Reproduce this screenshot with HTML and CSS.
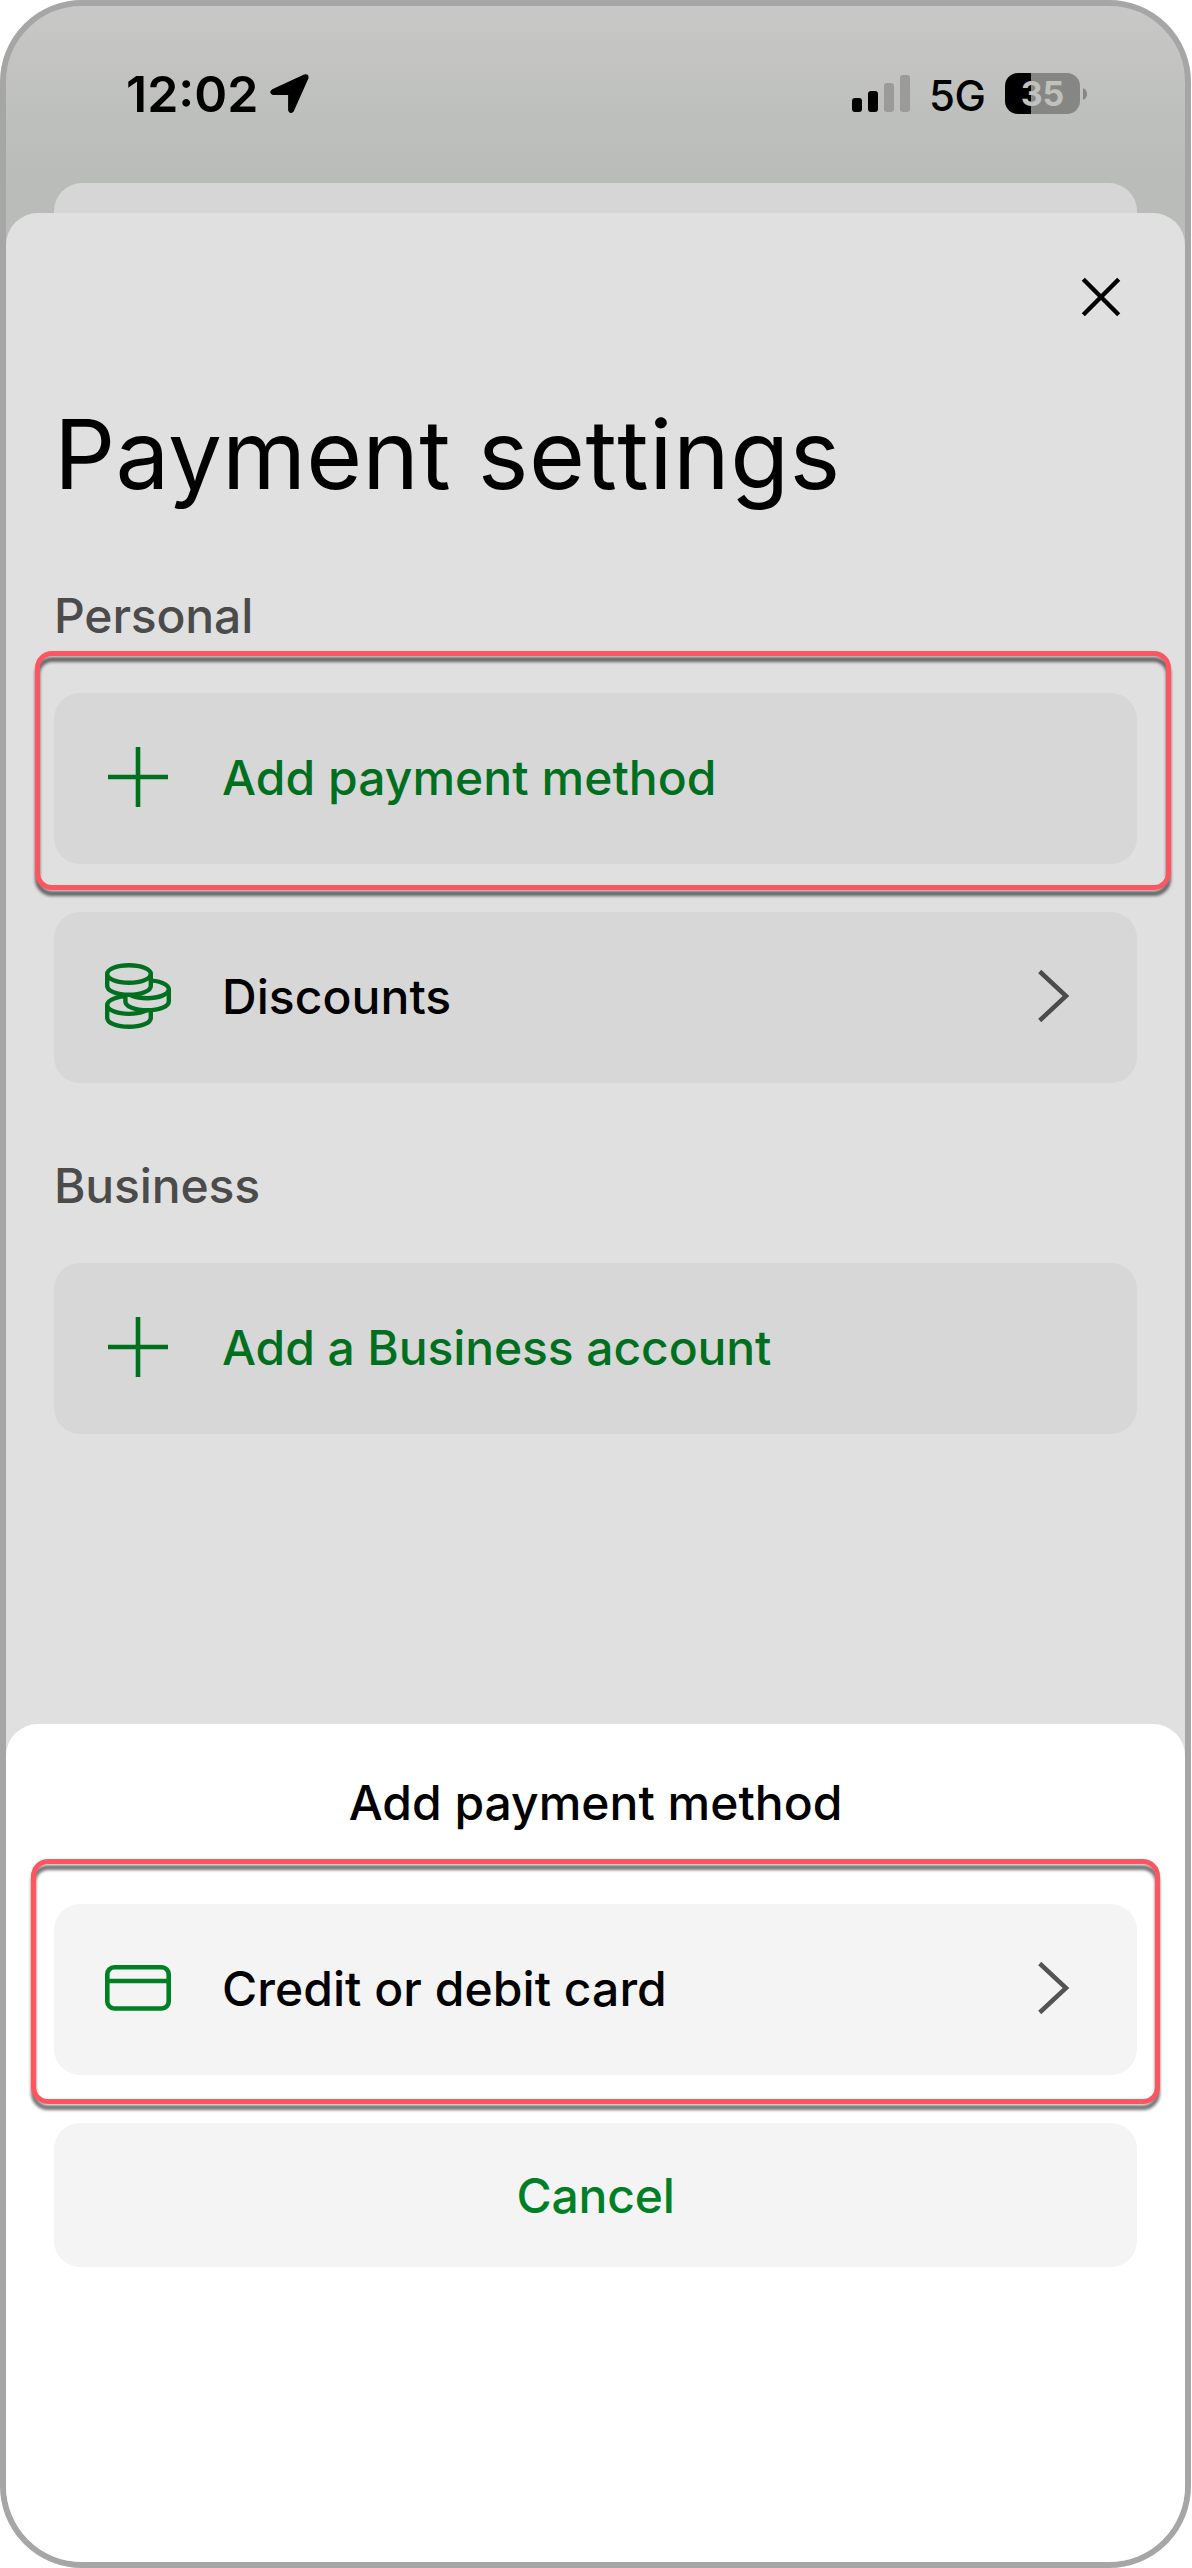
FILE: index.html
```html
<!DOCTYPE html>
<html lang="en">
<head>
<meta charset="utf-8">
<title>Payment settings</title>
<link rel="stylesheet" href="styles.css">
</head>
<body>
<div class="phone">
  <header class="status">
    <div class="status-left">
      <span class="time">12:02</span>
      <svg class="location" width="40" height="40" viewBox="0 0 40 40"><path d="M2.9 16.6 34.7 1.9Q37.5 1.1 37 3.9L22.4 36.6Q20.2 38.8 19.6 36V19.4H3Q.6 18.3 2.9 16.6Z" fill="#000" stroke="#000" stroke-width="3" stroke-linejoin="round"/></svg>
    </div>
    <div class="status-right">
      <svg class="signal" width="58" height="37" viewBox="0 0 58 37"><rect y="23" width="10" height="14" rx="3"/><rect x="16" y="16" width="10" height="21" rx="3"/><rect x="32" y="8" width="10" height="29" rx="3" fill="#9b9c9a"/><rect x="48" width="10" height="37" rx="3" fill="#9b9c9a"/></svg>
      <span class="network">5G</span>
      <div class="battery"><span class="level">35</span></div>
      <svg class="nub" width="4" height="12" viewBox="0 0 4 12"><path d="M0 0Q4 2 4 6T0 12Z" fill="#868785"/></svg>
    </div>
  </header>
  <div class="back-sheet"></div>
  <main class="sheet">
    <div class="close-bar">
      <svg width="40" height="40" viewBox="0 0 40 40"><path d="M2.3 2.3 37.7 37.7M37.7 2.3 2.3 37.7" stroke="#000" stroke-width="4.4"/></svg>
    </div>
    <h1 class="title">Payment <span class="unkerned">settings</span></h1>
    <h2 class="section personal">Personal</h2>
    <div class="row add">
      <svg class="icon" width="66" height="66" viewBox="0 0 66 66"><path d="M3 33H63M33 3V63" stroke="#00701f" stroke-width="4.6"/></svg>
      <span class="label">Add payment method</span>
      <div class="highlight highlight-top"></div>
    </div>
    <div class="row discounts">
      <svg class="icon" width="66" height="66" viewBox="0 0 66 66" fill="#d7d7d7" stroke="#00701f" stroke-width="4.4">
        <path d="M2.2 42V55C2.2 60 12 63.8 24 63.8S45.8 60 45.8 55V42"/><ellipse cx="24" cy="42" rx="21.8" ry="8.9"/>
        <path d="M20.4 26.3V38.4C20.4 43.4 30.1 47.2 42.1 47.2S63.8 43.4 63.8 38.4V26.3"/><ellipse cx="42.1" cy="26.3" rx="21.7" ry="8.9"/>
        <path d="M2.2 11V23C2.2 28 12 31.7 24 31.7S45.8 28 45.8 23V11"/><ellipse cx="24" cy="11" rx="21.8" ry="8.8"/>
      </svg>
      <span class="label">Discounts</span>
      <svg class="chevron" width="32" height="54" viewBox="0 0 32 54"><path d="M1.7 2.5 28 27 1.7 51.5" fill="none" stroke="#4b4b4b" stroke-width="4.5"/></svg>
    </div>
    <h2 class="section business">Business</h2>
    <div class="row add">
      <svg class="icon" width="66" height="66" viewBox="0 0 66 66"><path d="M3 33H63M33 3V63" stroke="#00701f" stroke-width="4.6"/></svg>
      <span class="label tight">Add a Business account</span>
    </div>
    <section class="action-sheet">
      <h3 class="action-title">Add payment method</h3>
      <div class="row light">
        <svg class="icon" width="66" height="66" viewBox="0 0 66 66" fill="none" stroke="#008025" stroke-width="4.6"><rect x="2.3" y="12.3" width="61.4" height="41.2" rx="7"/><path d="M2 26H64"/></svg>
        <span class="label">Credit or debit card</span>
        <svg class="chevron" width="32" height="54" viewBox="0 0 32 54"><path d="M1.7 2.5 28 27 1.7 51.5" fill="none" stroke="#545454" stroke-width="4.5"/></svg>
        <div class="highlight highlight-card"></div>
      </div>
      <button class="cancel">Cancel</button>
    </section>
  </main>
</div>
</body>
</html>
```
FILE: styles.css
```css
* { box-sizing: border-box; }
body { margin: 0; background: #fff; font-family: Inter, "Liberation Sans", sans-serif; color: #000; }
h1, h2, h3 { margin: 0; }

.phone {
  display: flex;
  flex-direction: column;
  width: 1191px;
  height: 2568px;
  border: 6px solid #a6a6a6;
  border-radius: 82px;
  overflow: hidden;
  background: linear-gradient(#c8c8c8 0, #c3c4c1 55px, #bdbfbc 115px, #babcb9 177px);
}

.status {
  display: flex;
  justify-content: space-between;
  height: 177px;
  padding: 67px 98px 0 120px;
}
.status-left, .status-right { display: flex; align-items: flex-start; }
.time { width: 143px; font-size: 50px; line-height: 42px; font-weight: 600; }
.location { margin-top: 1px; margin-left: 1px; }
.signal { margin-top: 2px; }
.network { width: 76px; margin-left: 19px; font-size: 42px; line-height: 45px; font-weight: 500; letter-spacing: -0.5px; }
.battery {
  width: 75px;
  height: 41px;
  border-radius: 13px;
  text-align: center;
  background: linear-gradient(90deg, #000 26px, #868785 26px);
}
.level { display: block; font-size: 34px; line-height: 41px; font-weight: 700; color: #bfc1bd; }
.nub { margin: 15px 0 0 3px; }

.back-sheet { height: 30px; margin: 0 48px; background: #d6d6d6; border-radius: 28px 28px 0 0; }
.sheet {
  flex: 1;
  display: flex;
  flex-direction: column;
  background: #e0e0e0;
  border-radius: 32px 32px 0 0;
}
.close-bar { display: flex; justify-content: flex-end; height: 181px; padding: 64px 64px 0 0; }
.title { margin-left: 48px; font-size: 96px; line-height: 120px; font-weight: 400; letter-spacing: 0.1px; }
.unkerned { font-kerning: none; letter-spacing: 0.5px; }
.section { margin-left: 48px; font-size: 48px; line-height: 60px; font-weight: 450; color: #4b4b4b; letter-spacing: -0.15px; }
.personal { margin-top: 72px; }
.business { margin-top: 73px; margin-bottom: 47px; }

.row {
  position: relative;
  display: flex;
  align-items: center;
  height: 171px;
  flex: none;
  margin: 0 48px;
  padding: 0 67px 3px 51px;
  border-radius: 26px;
  background: #d7d7d7;
  font-size: 48px;
  line-height: 60px;
  font-weight: 500;
}
.personal + .row { margin-top: 47px; }
.icon { margin-right: 51px; flex: none; }
.label { padding-top: 2px; letter-spacing: 0.05px; }
.tight { letter-spacing: -0.1px; }
.add { color: #00701f; }
.discounts { margin-top: 48px; }
.chevron { margin-left: auto; }
.light { background: #f4f4f4; }

/* Callout frames lie over the rows they point at */
.highlight {
  position: absolute;
  border: 5px solid #ff5560;
  border-radius: 17px;
  filter: drop-shadow(0 6px 1.5px rgba(0, 0, 0, 0.55));
}
.highlight-top { inset: -42.5px -34px -25.5px -19.5px; }
.highlight-card { inset: -45.5px -22.5px -28.5px -23.5px; }

.action-sheet {
  height: 838px;
  margin-top: auto;
  padding-top: 49px;
  background: #fff;
  border-radius: 32px 32px 0 0;
}
.action-title { margin-bottom: 71px; text-align: center; font-size: 48px; line-height: 60px; font-weight: 500; }
.cancel {
  display: block;
  width: 1083px;
  height: 144px;
  margin: 48px 48px 0;
  padding: 2px 0 0;
  border: 0;
  border-radius: 26px;
  background: #f4f4f4;
  color: #008025;
  font: 500 48px/60px Inter, "Liberation Sans", sans-serif;
  letter-spacing: -0.2px;
}
```
